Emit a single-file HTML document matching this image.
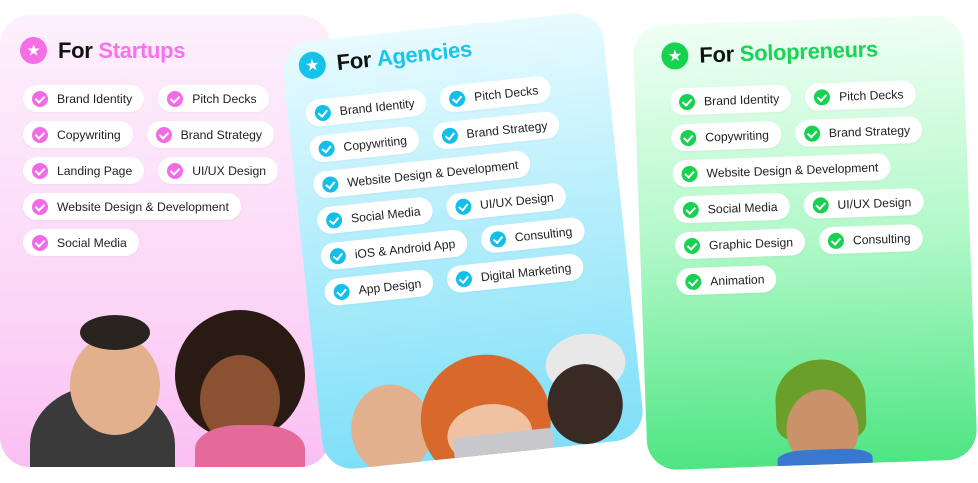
<!DOCTYPE html>
<html><head><meta charset="utf-8"><style>
*{margin:0;padding:0;box-sizing:border-box}
body{width:978px;height:483px;background:#fff;position:relative;overflow:hidden;font-family:"Liberation Sans",sans-serif}
.card{position:absolute;border-radius:30px;overflow:hidden}
.title{position:absolute;display:flex;align-items:center;font-weight:bold;font-size:22px;color:#111;letter-spacing:-0.3px}
.title .ic{width:27px;height:27px;border-radius:50%;margin-right:11px;display:flex;align-items:center;justify-content:center;color:#fff;font-size:14px}
.rows{position:absolute}
.row{display:flex;height:36px;align-items:flex-start}
.pill{height:27px;background:#fff;border-radius:14px;display:inline-flex;align-items:center;padding:0 12px 0 9px;font-size:12.2px;color:#222;margin-right:14px;white-space:nowrap;box-shadow:0 1px 2px rgba(0,0,0,.04)}
.ck{width:16px;height:16px;border-radius:50%;margin-right:9px;display:inline-block;position:relative;flex:none}
.ck:after{content:"";position:absolute;left:5px;top:3px;width:4px;height:7px;border:solid #fff;border-width:0 2px 2px 0;transform:rotate(45deg)}
.blob{position:absolute;border-radius:50%}
</style></head><body>

<!-- Left card -->
<div class="card" style="left:0;top:15px;width:330px;height:452px;background:linear-gradient(180deg,#fdf0fd 0%,#fbd8f7 60%,#fbbff3 100%)">
  <div class="title" style="left:20px;top:22px"><span class="ic" style="background:#f46ee6">★</span>For&nbsp;<span style="color:#f773ec">Startups</span></div>
  <div class="rows" style="left:23px;top:70px">
    <div class="row"><span class="pill"><span class="ck" style="background:#f26ae6"></span>Brand Identity</span><span class="pill"><span class="ck" style="background:#f26ae6"></span>Pitch Decks</span></div>
    <div class="row"><span class="pill"><span class="ck" style="background:#f26ae6"></span>Copywriting</span><span class="pill"><span class="ck" style="background:#f26ae6"></span>Brand Strategy</span></div>
    <div class="row"><span class="pill"><span class="ck" style="background:#f26ae6"></span>Landing Page</span><span class="pill"><span class="ck" style="background:#f26ae6"></span>UI/UX Design</span></div>
    <div class="row"><span class="pill"><span class="ck" style="background:#f26ae6"></span>Website Design &amp; Development</span></div>
    <div class="row"><span class="pill"><span class="ck" style="background:#f26ae6"></span>Social Media</span></div>
  </div>
  <div class="blob" style="left:30px;top:370px;width:145px;height:120px;background:#3a3a3a;border-radius:50% 50% 0 0"></div>
  <div class="blob" style="left:70px;top:320px;width:90px;height:100px;background:#e2b08c"></div>
  <div class="blob" style="left:80px;top:300px;width:70px;height:35px;background:#2a2420"></div>
  <div class="blob" style="left:175px;top:295px;width:130px;height:130px;background:#2a1a14"></div>
  <div class="blob" style="left:200px;top:340px;width:80px;height:90px;background:#8a5232"></div>
  <div class="blob" style="left:195px;top:410px;width:110px;height:60px;background:#e46a9a;border-radius:40% 40% 0 0"></div>
</div>

<!-- Middle card -->
<div class="card" style="left:302px;top:26px;width:322px;height:430px;transform:rotate(-6deg);background:linear-gradient(180deg,#e8fbff 0%,#b6eefc 45%,#7fdff8 100%)">
  <div class="title" style="left:16px;top:11px"><span class="ic" style="background:#14c2ea">★</span>For&nbsp;<span style="color:#1ac4ee">Agencies</span></div>
  <div class="rows" style="left:18px;top:59px">
    <div class="row"><span class="pill"><span class="ck" style="background:#12bfe8"></span>Brand Identity</span><span class="pill"><span class="ck" style="background:#12bfe8"></span>Pitch Decks</span></div>
    <div class="row"><span class="pill"><span class="ck" style="background:#12bfe8"></span>Copywriting</span><span class="pill"><span class="ck" style="background:#12bfe8"></span>Brand Strategy</span></div>
    <div class="row"><span class="pill"><span class="ck" style="background:#12bfe8"></span>Website Design &amp; Development</span></div>
    <div class="row"><span class="pill"><span class="ck" style="background:#12bfe8"></span>Social Media</span><span class="pill"><span class="ck" style="background:#12bfe8"></span>UI/UX Design</span></div>
    <div class="row"><span class="pill"><span class="ck" style="background:#12bfe8"></span>iOS &amp; Android App</span><span class="pill"><span class="ck" style="background:#12bfe8"></span>Consulting</span></div>
    <div class="row"><span class="pill"><span class="ck" style="background:#12bfe8"></span>App Design</span><span class="pill"><span class="ck" style="background:#12bfe8"></span>Digital Marketing</span></div>
  </div>
  <div class="blob" style="left:30px;top:350px;width:80px;height:90px;background:#e2b08c"></div>
  <div class="blob" style="left:100px;top:330px;width:130px;height:130px;background:#d8692a"></div>
  <div class="blob" style="left:125px;top:380px;width:85px;height:60px;background:#f0c2a2"></div>
  <div class="blob" style="left:130px;top:410px;width:100px;height:40px;background:#c8c8cc;border-radius:4px"></div>
  <div class="blob" style="left:230px;top:320px;width:80px;height:60px;background:#e8e8e8"></div>
  <div class="blob" style="left:228px;top:350px;width:75px;height:80px;background:#3a2a24"></div>
</div>

<!-- Right card -->
<div class="card" style="left:640px;top:20px;width:330px;height:445px;transform:rotate(-2deg);background:linear-gradient(180deg,#f0fff4 0%,#b0f8c8 50%,#4fe583 100%)">
  <div class="title" style="left:28px;top:18px"><span class="ic" style="background:#17d150">★</span>For&nbsp;<span style="color:#19d455">Solopreneurs</span></div>
  <div class="rows" style="left:35px;top:64px">
    <div class="row"><span class="pill"><span class="ck" style="background:#17d150"></span>Brand Identity</span><span class="pill"><span class="ck" style="background:#17d150"></span>Pitch Decks</span></div>
    <div class="row"><span class="pill"><span class="ck" style="background:#17d150"></span>Copywriting</span><span class="pill"><span class="ck" style="background:#17d150"></span>Brand Strategy</span></div>
    <div class="row"><span class="pill"><span class="ck" style="background:#17d150"></span>Website Design &amp; Development</span></div>
    <div class="row"><span class="pill"><span class="ck" style="background:#17d150"></span>Social Media</span><span class="pill"><span class="ck" style="background:#17d150"></span>UI/UX Design</span></div>
    <div class="row"><span class="pill"><span class="ck" style="background:#17d150"></span>Graphic Design</span><span class="pill"><span class="ck" style="background:#17d150"></span>Consulting</span></div>
    <div class="row"><span class="pill"><span class="ck" style="background:#17d150"></span>Animation</span></div>
  </div>
  <div class="blob" style="left:130px;top:340px;width:90px;height:80px;background:#6aa02a;border-radius:50% 50% 20% 20%"></div>
  <div class="blob" style="left:140px;top:370px;width:72px;height:80px;background:#c9926a"></div>
  <div class="blob" style="left:130px;top:430px;width:95px;height:30px;background:#3a78d0;border-radius:30% 30% 0 0"></div>
</div>

</body></html>
